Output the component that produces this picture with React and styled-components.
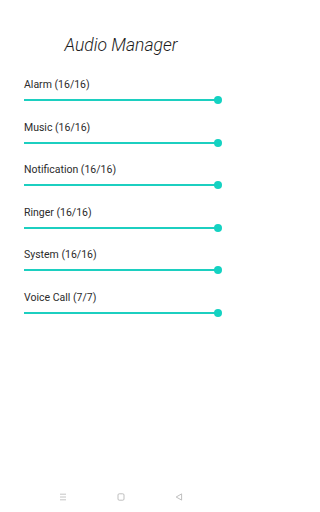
import React from 'react';
import styled, { createGlobalStyle } from 'styled-components';

const GlobalStyle = createGlobalStyle`
  html, body {
    margin: 0;
    padding: 0;
    background: #fff;
  }
  body {
    font-family: Roboto, "Liberation Sans", sans-serif;
  }
`;

const Screen = styled.div`
  display: flex;
  flex-direction: column;
  width: 242px;
  min-height: 512px;
  background: #fff;
`;

const Title = styled.h1`
  margin: 0;
  padding-top: 33px;
  font-size: 17.5px;
  line-height: 24px;
  font-weight: 300;
  font-style: italic;
  text-align: center;
  color: #1c1c1c;
`;

const List = styled.div`
  display: flex;
  flex-direction: column;
  gap: 15.5px;
  padding: 21px 20px 0 24px;
`;

const Row = styled.div`
  display: flex;
  flex-direction: column;
  gap: 3px;
`;

const Label = styled.div`
  font-size: 10.5px;
  line-height: 14px;
  color: #2b2b2b;
`;

const Slider = styled.div`
  display: flex;
  align-items: center;
  height: 10px;
`;

const Track = styled.div`
  flex: 1;
  height: 2px;
  background: #1ccfc0;
`;

const Thumb = styled.div`
  width: 8px;
  height: 8px;
  margin-left: -4px;
  border-radius: 50%;
  background: #14d2c2;
`;

const NavBar = styled.div`
  margin-top: auto;
  height: 30px;
  display: flex;
  align-items: center;
  justify-content: center;
  gap: 50px;
`;

const NavIcon = styled.svg`
  width: 8px;
  height: 8px;
  display: block;
`;

const channels = [
  { name: 'Alarm', value: 16, max: 16 },
  { name: 'Music', value: 16, max: 16 },
  { name: 'Notification', value: 16, max: 16 },
  { name: 'Ringer', value: 16, max: 16 },
  { name: 'System', value: 16, max: 16 },
  { name: 'Voice Call', value: 7, max: 7 },
];

const App = () => {
  return (
    <Screen>
      <GlobalStyle />
      <Title>Audio Manager</Title>
      <List>
        {channels.map((c) => (
          <Row key={c.name}>
            <Label>{`${c.name} (${c.value}/${c.max})`}</Label>
            <Slider>
              <Track />
              <Thumb />
            </Slider>
          </Row>
        ))}
      </List>
      <NavBar>
        <NavIcon viewBox="0 0 8 8" fill="none" stroke="#b8b8b8" strokeWidth="0.8">
          <path d="M1 1.2h6M1 4h6M1 6.8h6" />
        </NavIcon>
        <NavIcon viewBox="0 0 8 8" fill="none" stroke="#b8b8b8" strokeWidth="0.9">
          <rect x="1" y="0.8" width="6" height="6.4" rx="1.2" />
        </NavIcon>
        <NavIcon viewBox="0 0 8 8" fill="none" stroke="#b8b8b8" strokeWidth="0.9">
          <path d="M6.6 0.9L1.2 4l5.4 3.1z" strokeLinejoin="round" />
        </NavIcon>
      </NavBar>
    </Screen>
  );
};

export default App;
